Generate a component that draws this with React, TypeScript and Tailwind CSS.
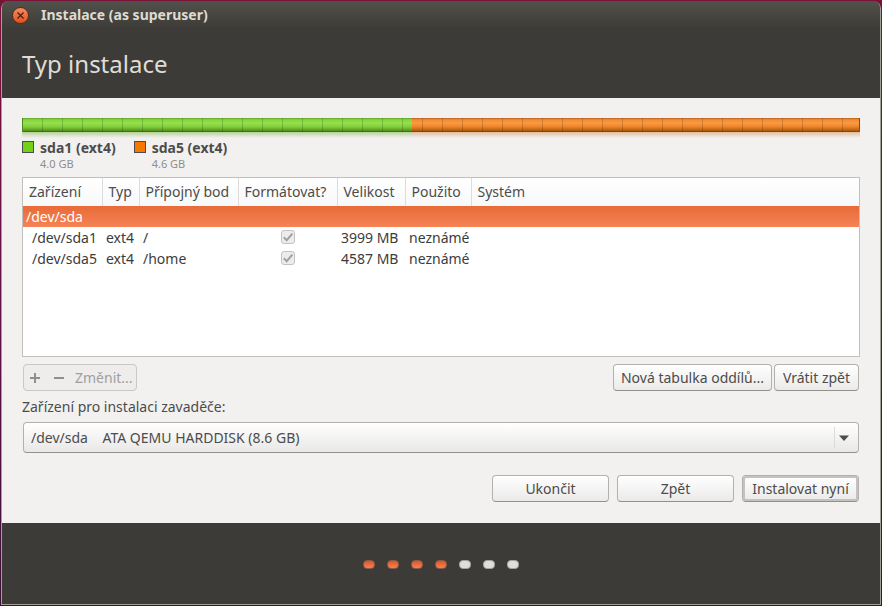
import { useState } from "react";
import type { ReactNode } from "react";

type Partition = {
  device: string;
  type: string;
  mount: string;
  size: string;
  used: string;
};

const partitions: Partition[] = [
  { device: "/dev/sda1", type: "ext4", mount: "/", size: "3999 MB", used: "neznámé" },
  { device: "/dev/sda5", type: "ext4", mount: "/home", size: "4587 MB", used: "neznámé" },
];

const columns = [
  { label: "Zařízení", width: "w-[79px]" },
  { label: "Typ", width: "w-[37px]" },
  { label: "Přípojný bod", width: "w-[99px]" },
  { label: "Formátovat?", width: "w-[99px]" },
  { label: "Velikost", width: "w-[68px]" },
  { label: "Použito", width: "w-[66px]" },
  { label: "Systém", width: "" },
];

const steps = [true, true, true, true, false, false, false];

function DiskBar() {
  return (
    <div>
      <div className="grid h-[14px]">
        <div className="col-start-1 row-start-1 flex">
          <div className="w-[46.5%] border-l border-[#4e8a1a] bg-[linear-gradient(180deg,#5fa326_0%,#84d340_12%,#95e04f_35%,#84d23e_60%,#5c9c22_88%,#35600c_100%)]" />
          <div className="flex-1 border-r border-[#8a4a0c] bg-[linear-gradient(180deg,#b5601a_0%,#f08a34_12%,#fb9a42_35%,#ee872c_60%,#b96112_88%,#7a3a04_100%)]" />
        </div>
        <div className="col-start-1 row-start-1 ml-px bg-[repeating-linear-gradient(90deg,transparent_0px,transparent_19px,rgba(0,0,0,0.16)_19px,rgba(0,0,0,0.16)_20px)]" />
      </div>
      <div className="flex h-[6px]">
        <div className="w-[46.5%] bg-linear-to-b from-[#b5d196] to-[#f2f1f0]" />
        <div className="flex-1 bg-linear-to-b from-[#e0bd9c] to-[#f2f1f0]" />
      </div>
    </div>
  );
}

function Legend({ color, name, size }: { color: string; name: string; size: string }) {
  return (
    <li className="flex gap-1.5">
      <span className={`mt-[3px] size-3 border border-[#4c4c4c] ${color}`} />
      <div>
        <div className="text-sm/5 font-bold">{name}</div>
        <div className="text-[11px]/3 text-[#8f8e8c]">{size}</div>
      </div>
    </li>
  );
}

function Button({ children, className = "" }: { children: ReactNode; className?: string }) {
  return (
    <button
      type="button"
      className={`h-[27px] rounded border border-[#b3b1ae] border-b-[#93918e] bg-linear-to-b from-white to-[#ebeae9] text-center whitespace-nowrap ${className}`}
    >
      {children}
    </button>
  );
}

function TickBox({ label }: { label: string }) {
  return (
    <label className="mx-auto mb-0.5 grid size-[14px] place-items-center rounded-[3px] border border-[#c3c2c1] bg-[#ececeb]">
      <input type="checkbox" checked disabled aria-label={label} className="col-start-1 row-start-1 size-3 appearance-none" />
      <svg viewBox="0 0 12 12" className="col-start-1 row-start-1 size-3" aria-hidden="true">
        <path d="M1.8 6.2 4.7 9.2 10.4 2.6" fill="none" stroke="#a2a1a0" strokeWidth="2" />
      </svg>
    </label>
  );
}

function PartitionTable() {
  return (
    <div className="h-[180px] border border-[#c2c0bd] bg-white">
      <table className="w-full table-fixed border-collapse text-left whitespace-nowrap">
        <thead>
          <tr className="h-7 bg-linear-to-b from-white to-[#f7f8f9]">
            {columns.map((column) => (
              <th
                key={column.label}
                className={`border-r border-[#dddcdb] px-1.5 font-normal last:border-r-0 ${column.width}`}
              >
                {column.label}
              </th>
            ))}
          </tr>
        </thead>
        <tbody className="text-[#3c3c3c]">
          <tr className="h-[21px] bg-linear-to-b from-[#e86a37] to-[#f58355] text-white">
            <td colSpan={7} className="px-[3px]">
              /dev/sda
            </td>
          </tr>
          {partitions.map((partition) => (
            <tr key={partition.device} className="h-[21px]">
              <td className="pl-[9px]">{partition.device}</td>
              <td className="pl-1">{partition.type}</td>
              <td className="pl-1">{partition.mount}</td>
              <td>
                <TickBox label={`Formátovat ${partition.device}`} />
              </td>
              <td className="pl-1">{partition.size}</td>
              <td className="pl-1">{partition.used}</td>
              <td />
            </tr>
          ))}
        </tbody>
      </table>
    </div>
  );
}

export default function App() {
  const [device, setDevice] = useState("sda");

  return (
    <div className="min-h-screen bg-linear-to-b from-[#7a1238] via-[#65104a] to-[#3e1038] p-px font-['Noto_Sans',sans-serif] text-sm/5 text-[#4c4c4c]">
      <div className="flex min-h-[calc(100vh-2px)] flex-col overflow-hidden rounded-t-lg border-x border-b border-[#a3a099] bg-[#3c3b37]">
        <div className="flex h-7 items-center gap-3 bg-linear-to-b from-[#52514b] to-[#3c3b37] px-2.5">
          <button
            type="button"
            aria-label="Zavřít"
            className="grid size-[17px] place-items-center rounded-full border border-[#5a2c18] bg-linear-to-b from-[#f58a63] to-[#e2501c]"
          >
            <svg viewBox="0 0 8 8" className="size-[9px]" aria-hidden="true">
              <path d="M1.3 1.3 6.7 6.7M6.7 1.3 1.3 6.7" stroke="#4a2012" strokeWidth="1.1" />
            </svg>
          </button>
          <div className="text-sm/5 font-bold text-[#dfdbd2]">Instalace (as superuser)</div>
        </div>

        <header className="flex h-[69px] items-center px-5">
          <h1 className="text-2xl text-[#e0ddd6]">Typ instalace</h1>
        </header>

        <main className="flex-1 bg-[#f2f1f0] px-5 pt-5 pb-[21px]">
          <DiskBar />
          <ul className="flex gap-[18px]">
            <Legend color="bg-[#73d216]" name="sda1 (ext4)" size="4.0 GB" />
            <Legend color="bg-[#f57900]" name="sda5 (ext4)" size="4.6 GB" />
          </ul>

          <div className="mt-[7px]">
            <PartitionTable />
          </div>

          <div className="mx-px mt-[7px] flex justify-between">
            <div className="flex h-[27px] items-center rounded border border-[#c9c8c6] bg-[#eeedec] text-[#a09f9d]">
              <button type="button" disabled aria-label="Přidat" className="grid w-[22px] place-items-center">
                <svg viewBox="0 0 10 10" className="size-2.5" aria-hidden="true">
                  <path d="M5 0V10M0 5H10" stroke="#8f8f8d" strokeWidth="2" />
                </svg>
              </button>
              <button type="button" disabled aria-label="Odebrat" className="grid w-[26px] place-items-center">
                <svg viewBox="0 0 10 10" className="size-2.5" aria-hidden="true">
                  <path d="M0 5H10" stroke="#8f8f8d" strokeWidth="2" />
                </svg>
              </button>
              <button type="button" disabled className="px-[3px]">
                Změnit...
              </button>
            </div>
            <div className="flex gap-0.5">
              <Button className="w-[159px]">Nová tabulka oddílů...</Button>
              <Button className="w-[85px]">Vrátit zpět</Button>
            </div>
          </div>

          <label htmlFor="boot-device" className="mt-1.5 block">
            Zařízení pro instalaci zavaděče:
          </label>
          <div className="mx-px mt-[5px] grid h-[31px] items-center rounded border border-[#b3b1ae] border-b-[#93918e] bg-linear-to-b from-white to-[#e9e8e7]">
            <select
              id="boot-device"
              value={device}
              onChange={(event) => setDevice(event.target.value)}
              className="col-start-1 row-start-1 w-full appearance-none bg-transparent pr-8 pl-[7px]"
            >
              <option value="sda">{"/dev/sda\u00a0\u00a0\u00a0\u00a0ATA QEMU HARDDISK (8.6 GB)"}</option>
            </select>
            <div className="pointer-events-none col-start-1 row-start-1 flex h-[21px] w-6 items-center justify-self-end border-l border-[#dcdbd9] pl-1">
              <svg viewBox="0 0 10 6" className="h-1.5 w-2.5" aria-hidden="true">
                <path d="M0 0.5H10L5 6Z" fill="#4c4c4c" />
              </svg>
            </div>
          </div>

          <div className="mx-px mt-[22px] flex justify-end gap-2">
            <Button className="w-[117px]">Ukončit</Button>
            <Button className="w-[117px]">Zpět</Button>
            <Button className="w-[117px] inset-ring-2 inset-ring-[#c4c2c0]">Instalovat nyní</Button>
          </div>
        </main>

        <footer className="flex h-[81px] items-center justify-center gap-3 pt-0.5">
          {steps.map((done, index) => (
            <span
              key={index}
              className={`h-[9px] w-3 rounded-[4px] border ${done ? "border-[#8a5a48] bg-linear-to-b from-[#e4521c] to-[#f08358]" : "border-[#a3a29f] bg-[#dededd]"}`}
            />
          ))}
        </footer>
      </div>
    </div>
  );
}
